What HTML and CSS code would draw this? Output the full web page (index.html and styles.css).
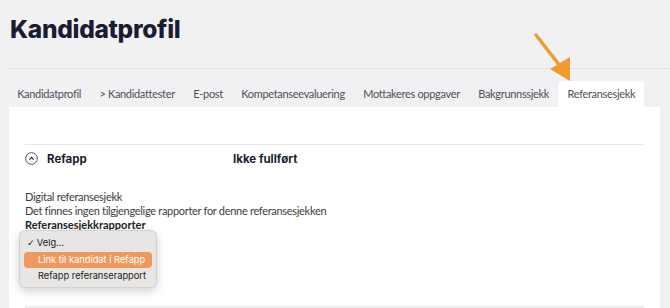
FILE: index.html
```html
<!DOCTYPE html>
<html lang="no">
<head>
    <meta charset="UTF-8">
    <meta name="viewport" content="width=device-width, initial-scale=1.0">
    <title>Kandidatprofil</title>
    <link rel="stylesheet" href="styles.css">
</head>
<body>

<header class="page-header">
    <h1>Kandidatprofil</h1>
</header>

<nav class="tabs">
    <a class="tab">Kandidatprofil</a>
    <a class="tab">&gt; Kandidattester</a>
    <a class="tab">E-post</a>
    <a class="tab">Kompetanseevaluering</a>
    <a class="tab">Mottakeres oppgaver</a>
    <a class="tab">Bakgrunnssjekk</a>
    <a class="tab active">Referansesjekk</a>
</nav>

<!-- pil som peker på aktiv fane -->
<svg class="pointer" width="50" height="52" viewBox="0 0 50 52">
    <line x1="3" y1="3" x2="27" y2="34" stroke="#f09a30" stroke-width="3.5" stroke-linecap="round"/>
    <polygon points="17,37 37,25 37,49" fill="#f09a30"/>
</svg>

<div class="panel">
    <div class="check-row">
        <span class="toggle">
            <svg width="13" height="13" viewBox="0 0 13 13">
                <circle cx="6.5" cy="6.5" r="5.8" fill="none" stroke="#555" stroke-width="1"/>
                <polyline points="4.4,7.6 6.5,5.5 8.6,7.6" fill="none" stroke="#333" stroke-width="1.3"/>
            </svg>
        </span>
        <span class="check-name">Refapp</span>
        <span class="check-status">Ikke fullført</span>
    </div>

    <div class="check-body">
        <p>Digital referansesjekk</p>
        <p>Det finnes ingen tilgjengelige rapporter for denne referansesjekken</p>
        <p class="label">Referansesjekkrapporter</p>
    </div>

    <div class="table-head">
        <span></span><span></span><span></span><span></span>
    </div>

    <ul class="menu">
        <li class="selected">Velg...</li>
        <li class="highlight">Link til kandidat i Refapp</li>
        <li>Refapp referanserapport</li>
    </ul>
</div>

</body>
</html>
```

FILE: styles.css
```css
html {
    overflow: hidden;
}

body {
    font-family: Lato, "Open Sans", Arial, sans-serif;
    margin: 0;
    padding: 0;
    background-color: #f1f1f4;
    color: #3c3c3c;
    position: relative;
    height: 308px;
    overflow: hidden;
}

.page-header {
    margin-left: 9px;
    padding: 14px 0 0 1px;
    height: 54px;
    border-bottom: 1px solid #e2e2e6;
}

.page-header h1 {
    margin: 0;
    font-family: Inter, "Open Sans", sans-serif;
    font-size: 24.5px;
    font-weight: 800;
    letter-spacing: -0.3px;
    color: #1c1c30;
}

.tabs {
    display: flex;
    margin: 12px 0 0 8px;
    height: 26px;
    white-space: nowrap;
}

.tab {
    display: block;
    flex-shrink: 0;
    padding: 0 9.2px;
    font-size: 11px;
    letter-spacing: -0.32px;
    line-height: 26px;
    color: #4f4f55;
}

.tab.active {
    background: white;
    border-radius: 4px 4px 0 0;
}

.pointer {
    position: absolute;
    left: 533px;
    top: 32px;
}

.panel {
    position: relative;
    box-sizing: border-box;
    margin: 0 10px 0 9px;
    background: white;
    padding: 37px 16px 0 16px;
    height: 201px;
    overflow: hidden;
}

.check-row {
    display: flex;
    align-items: center;
    border-top: 1px solid #e8e8eb;
    height: 25px;
    padding-top: 1px;
}

.toggle {
    display: flex;
    width: 13px;
    margin-right: 9px;
}

.check-name, .check-status {
    font-family: Inter, "Open Sans", sans-serif;
    font-weight: 700;
    font-size: 11.5px;
    color: #1c1c30;
}

.check-name {
    width: 186px;
}

.check-body {
    margin-top: 19px;
    font-size: 11px;
    letter-spacing: -0.3px;
    color: #3c3c3c;
}

.check-body p {
    margin: 0;
    line-height: 14px;
}

.check-body .label {
    font-weight: 700;
    letter-spacing: 0;
    color: #222;
}

.table-head {
    display: grid;
    grid-template-columns: 115px 188px 159px 1fr;
    margin-top: 74px;
    border-top: 2px solid #ececef;
    height: 4px;
}

.table-head span + span {
    border-left: 1px solid #e2e2e6;
}

.menu {
    position: absolute;
    left: 10px;
    top: 123px;
    box-sizing: border-box;
    width: 138px;
    height: 58px;
    margin: 0;
    padding: 4px 4px;
    list-style: none;
    background: #e7e6e4;
    border: 1px solid #d2d1cf;
    border-radius: 6px;
    box-shadow: 0 3px 10px rgba(0, 0, 0, 0.18);
    font-family: Inter, "Open Sans", sans-serif;
    font-size: 9.3px;
    color: #222;
    white-space: nowrap;
}

.menu li {
    padding: 0 0 0 14px;
    line-height: 16.5px;
    border-radius: 4px;
}

.menu li.selected {
    padding-left: 3px;
}

.menu li.selected::before {
    content: "✓";
    margin-right: 2px;
    font-family: "DejaVu Sans", sans-serif;
}

.menu li.highlight {
    background: #ef9a5c;
    color: white;
}
```
